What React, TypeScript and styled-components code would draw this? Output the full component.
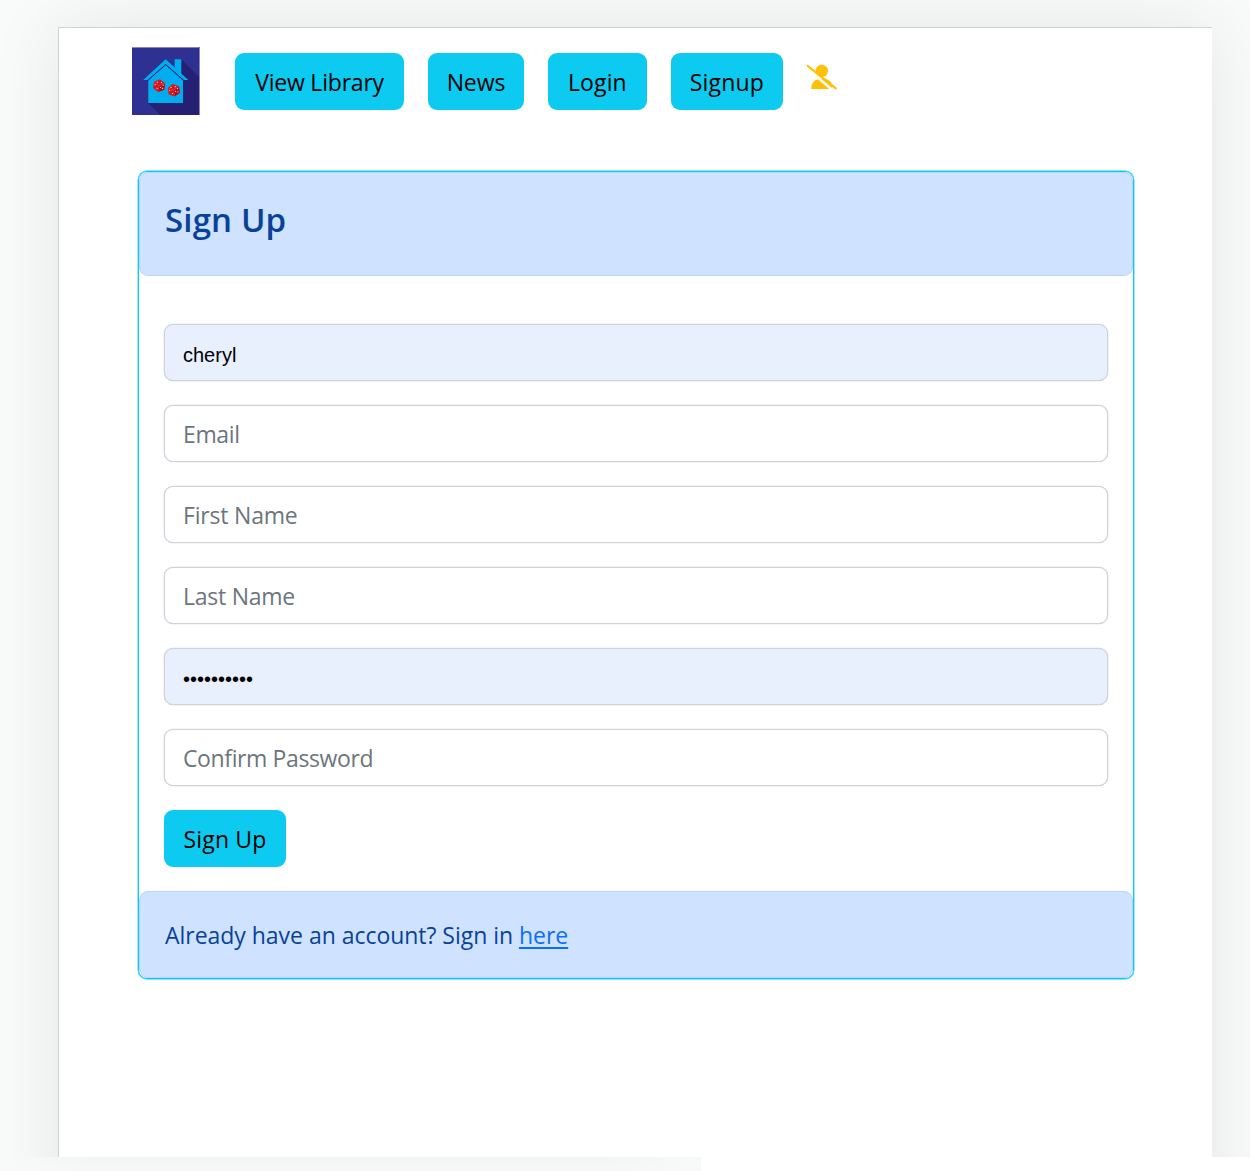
import React from "react";
import styled, { createGlobalStyle } from "styled-components";

const GlobalStyle = createGlobalStyle`
  * { box-sizing: border-box; }
  body {
    margin: 0;
    background: #fff;
    font-family: "Open Sans", "Noto Sans", sans-serif;
    font-size: 23px;
    font-weight: 400;
    line-height: 36px;
    color: #212529;
  }
`;

const Page = styled.div`
  width: 1250px;
  height: 1171px;
  overflow: hidden;
  background: #fff;
`;

const Backdrop = styled.div`
  height: 1157px;
  overflow: hidden;
  background: #f9fbfa;
  padding: 27px 38px 0 58px;
`;

const Sheet = styled.main`
  height: 1400px;
  background: #fff;
  border: solid #d0d3d2;
  border-width: 1px 0 0 1px;
  box-shadow: 0 0 68px rgba(0, 0, 0, 0.085);
  padding: 19px 78px 0 73px;
`;

const BottomStrip = styled.div`
  width: 701px;
  height: 14px;
  background: linear-gradient(90deg, #f8faf9 0, rgba(248, 250, 249, 0) 100px, rgba(248, 250, 249, 0) 600px, #f8faf9 100%),
    linear-gradient(#f2f3f3, #f6f7f7);
`;

const Nav = styled.nav`
  display: flex;
  align-items: flex-start;
  height: 68px;
`;

const Logo = styled.svg`
  display: block;
  width: 68px;
  height: 68px;
  margin-right: 35.4px;
`;

const UserIcon = styled.svg`
  display: block;
  width: 30px;
  height: 26px;
  margin-top: 17px;
`;

const Button = styled.button<{ $width: number; $spacing?: number }>`
  width: ${(p) => p.$width}px;
  height: 57px;
  padding: 2px 0 0;
  border: 0;
  border-radius: 9px;
  background: #0dcaf0;
  color: #000;
  font: inherit;
  letter-spacing: ${(p) => p.$spacing ?? 0}px;
  white-space: nowrap;
`;

const NavButton = styled(Button)`
  margin: 5.5px 24px 0 0;
`;

const Card = styled.section`
  width: 996px;
  margin: 56px 0 0 6px;
  border: 1px solid #0dcaf0;
  border-radius: 9px;
  box-shadow: 0 0 0 0.4px #0dcaf0;
`;

const Banner = styled.div<{ $height: number }>`
  height: ${(p) => p.$height}px;
  border: 1px solid #b6d4fe;
  border-radius: 9px;
  background: #cfe2ff;
  color: #084298;
  padding: 0 25px;
`;

const Title = styled.h1`
  margin: 0;
  padding-top: 25px;
  font-size: 33px;
  font-weight: 600;
  line-height: 44px;
  letter-spacing: 0.15px;
`;

const FooterText = styled.p`
  margin: 0;
  padding-top: 25px;
  letter-spacing: -0.03px;
`;

const Link = styled.a`
  color: #0d6efd;
  text-decoration: underline;
  text-decoration-thickness: 2px;
  text-underline-offset: 3px;
`;

const Form = styled.form`
  display: flex;
  flex-direction: column;
  align-items: flex-start;
  gap: 24px;
  padding: 48px 24px 24px 25px;
`;

const Field = styled.input<{ $filled?: boolean; $spacing?: number }>`
  width: 944px;
  height: 57px;
  padding: ${(p) => (p.$filled ? "6px" : "1px")} 18px 0 18px;
  border: 1px solid #ced4da;
  border-radius: 9px;
  outline: 0;
  box-shadow: 0 0 0 0.3px #ced4da;
  background: ${(p) => (p.$filled ? "#e8f0fe" : "#fff")};
  color: #000;
  font-family: ${(p) => (p.$filled ? '"Liberation Sans", Arial, sans-serif' : "inherit")};
  font-size: ${(p) => (p.$filled ? "20px" : "23px")};
  font-weight: inherit;
  letter-spacing: ${(p) => p.$spacing ?? 0}px;

  &::placeholder {
    color: #6c757d;
    opacity: 1;
  }
`;

function Die({ x, y, turn }: { x: number; y: number; turn: number }) {
  return (
    <g transform={`translate(${x} ${y}) rotate(${turn})`}>
      <path d="M-5.5-3.2 0-6.4 5.7-3.4 5.8 3.2 0 6.3-5.6 3.2Z" fill="#d9141c" />
      <path d="M0 0 5.7-3.4 5.8 3.2 0 6.3Z" fill="#aa0d17" />
      <path d="M-5.5-3.2 0 0 5.7-3.4M0 0V6.3" fill="none" stroke="#ed4a4e" strokeWidth=".5" />
      <g fill="#fff" fillOpacity=".85">
        <circle cx="-2.2" cy="-3.3" r=".6" />
        <circle cx="2.1" cy="-3.5" r=".6" />
        <circle cx="-4" cy="-.6" r=".6" />
        <circle cx="-1.6" cy="3" r=".6" />
        <circle cx="1.8" cy="1.4" r=".6" />
        <circle cx="4" cy="2.2" r=".6" />
        <circle cx="4" cy="-1.2" r=".6" />
      </g>
    </g>
  );
}

const navItems = [
  { label: "View Library", width: 168.3, spacing: -0.2 },
  { label: "News", width: 96.5, spacing: -0.1 },
  { label: "Login", width: 98.4, spacing: 0.1 },
  { label: "Signup", width: 112.6, spacing: 0.2 },
];

export default function App() {
  return (
    <Page>
      <GlobalStyle />
      <Backdrop>
        <Sheet>
          <Nav>
            <Logo viewBox="0 0 68 68">
              <path d="M0 0H68V68H0Z" fill="#2e3192" />
              <path d="M49.3 12.3 68 31V68H28L16.3 56Z" fill="#262074" />
              <path d="M16.3 32.5 33.7 17.5 51 32.5V56H16.3Z" fill="#00aeef" />
              <path d="M42.7 12.3H49.3V27L42.7 21Z" fill="#00aeef" />
              <path d="M15.4 33.6 33.7 17.3 52 33.6" fill="none" stroke="#262074" strokeWidth="1.2" />
              <path d="M11.2 33 33.7 12.2 56.3 33H52L33.7 16.9 15.4 33Z" fill="#00aeef" />
              <Die x={27} y={38.7} turn={8} />
              <Die x={41.7} y={43.3} turn={-8} />
              <path d="M0 .5H67.5V68" fill="none" stroke="#8587b9" />
            </Logo>
            {navItems.map((item) => (
              <NavButton key={item.label} $width={item.width} $spacing={item.spacing}>
                {item.label}
              </NavButton>
            ))}
            <UserIcon viewBox="0.8 0 30 26">
              <g fill="#ffc107">
                <circle cx="15.6" cy="6.9" r="6.2" />
                <path d="M5 25C5 19 8.6 15 14 15H18C24 15 26 19 26 25Z" />
              </g>
              <path d="M-1 2.8 27.4 27" stroke="#fff" strokeWidth="2.6" fill="none" />
              <path d="M1.4 1.8 29.6 24.4" stroke="#ffc107" strokeWidth="2.1" strokeLinecap="round" fill="none" />
            </UserIcon>
          </Nav>

          <Card>
            <Banner $height={103.5}>
              <Title>Sign Up</Title>
            </Banner>
            <Form onSubmit={(e) => e.preventDefault()}>
              <Field $filled defaultValue="cheryl" />
              <Field placeholder="Email" $spacing={-0.35} />
              <Field placeholder="First Name" $spacing={-0.2} />
              <Field placeholder="Last Name" $spacing={-0.25} />
              <Field $filled type="password" defaultValue="boardgames" />
              <Field placeholder="Confirm Password" $spacing={-0.38} />
              <Button $width={122} $spacing={0.2}>Sign Up</Button>
            </Form>
            <Banner $height={87}>
              <FooterText>
                Already have an account? Sign in <Link href="#">here</Link>
              </FooterText>
            </Banner>
          </Card>
        </Sheet>
      </Backdrop>
      <BottomStrip />
    </Page>
  );
}
